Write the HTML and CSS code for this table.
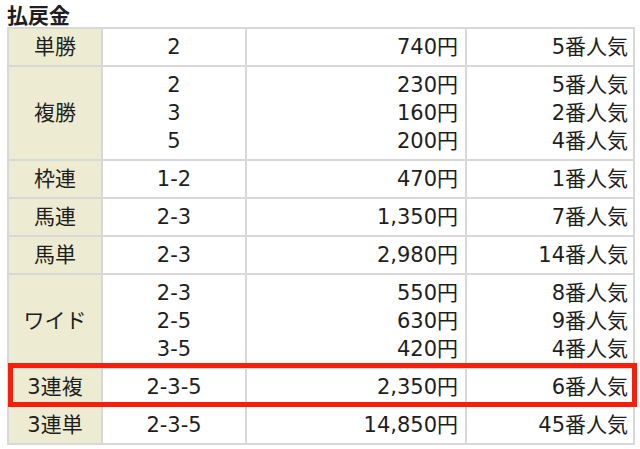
FILE: index.html
```html
<!DOCTYPE html>
<html lang="ja">
<head>
<meta charset="utf-8">
<link rel="stylesheet" href="styles.css">
</head>
<body>
<div class="page">
  <h2 class="title">払戻金</h2>
  <table class="pay">
    <colgroup>
      <col class="c1"><col class="c2"><col class="c3"><col class="c4">
    </colgroup>
    <tbody>
      <tr><th>単勝</th><td class="num">2</td><td class="yen">740円</td><td class="pop">5番人気</td></tr>
      <tr><th>複勝</th><td class="num">2<br>3<br>5</td><td class="yen">230円<br>160円<br>200円</td><td class="pop">5番人気<br>2番人気<br>4番人気</td></tr>
      <tr><th>枠連</th><td class="num">1-2</td><td class="yen">470円</td><td class="pop">1番人気</td></tr>
      <tr><th>馬連</th><td class="num">2-3</td><td class="yen">1,350円</td><td class="pop">7番人気</td></tr>
      <tr><th>馬単</th><td class="num">2-3</td><td class="yen">2,980円</td><td class="pop">14番人気</td></tr>
      <tr><th>ワイド</th><td class="num">2-3<br>2-5<br>3-5</td><td class="yen">550円<br>630円<br>420円</td><td class="pop">8番人気<br>9番人気<br>4番人気</td></tr>
      <tr><th>3連複</th><td class="num">2-3-5</td><td class="yen">2,350円</td><td class="pop">6番人気</td></tr>
      <tr><th>3連単</th><td class="num">2-3-5</td><td class="yen">14,850円</td><td class="pop">45番人気</td></tr>
    </tbody>
  </table>
  <div class="mark"></div>
</div>
</body>
</html>
```
FILE: styles.css
```css
html, body {
  margin: 0;
  padding: 0;
  background: #ffffff;
}
body {
  font-family: "DejaVu Sans", "Noto Sans CJK JP", sans-serif;
  color: #1e1e1e;
}
.page {
  position: relative;
  width: 640px;
  height: 449px;
  padding: 0 0 0 7px;
  box-sizing: border-box;
}
.title {
  margin: 0;
  padding-top: 1px;
  height: 26px;
  font-family: "Noto Sans CJK JP", sans-serif;
  font-size: 21px;
  line-height: 26px;
  font-weight: bold;
}
.pay {
  border-collapse: collapse;
  table-layout: fixed;
  width: 626px;
  font-size: 21px;
  line-height: 28px;
}
.pay th, .pay td {
  border: 2px solid #d8d8d8;
  padding: 4px 0;
  vertical-align: middle;
  white-space: nowrap;
}
.pay th {
  background: #edecd2;
  font-weight: normal;
  text-align: center;
}
.c1 { width: 94px; }
.c2 { width: 144px; }
.c3 { width: 220px; }
.c4 { width: 168px; }
.num { text-align: center; }
.yen { text-align: right; padding-right: 7px !important; }
.pop { text-align: right; padding-right: 5px !important; }
.mark {
  position: absolute;
  left: 8px;
  top: 363px;
  width: 629px;
  height: 44px;
  box-sizing: border-box;
  border: 5px solid #f4200c;
}
```
